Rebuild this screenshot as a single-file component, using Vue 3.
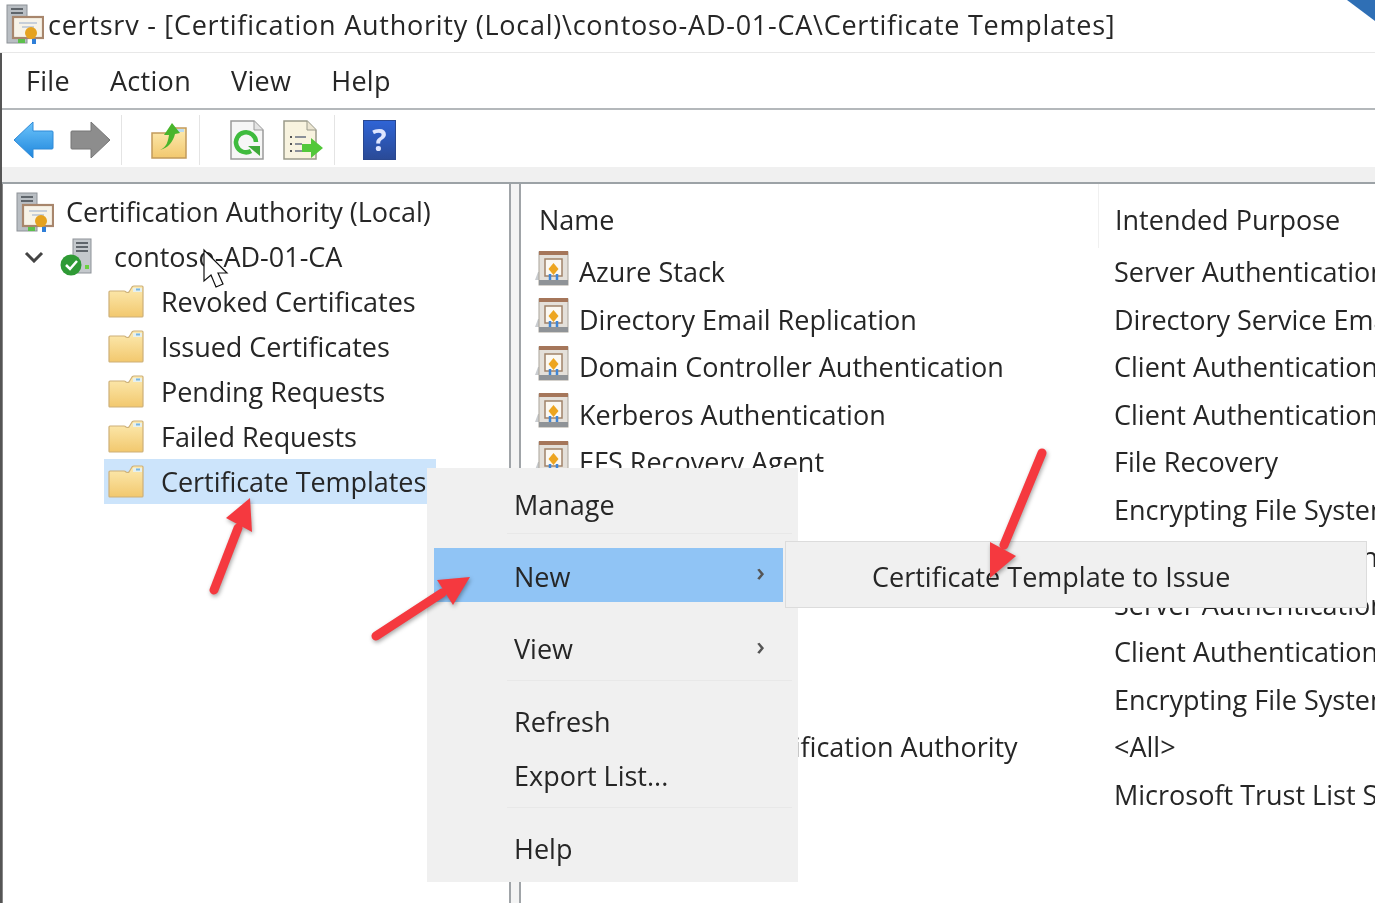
<script setup>
const menus = ['File', 'Action', 'View', 'Help']
const tree = ['Revoked Certificates', 'Issued Certificates', 'Pending Requests', 'Failed Requests', 'Certificate Templates']
const rows = [
  ['Azure Stack', 'Server Authentication'],
  ['Directory Email Replication', 'Directory Service Email Replication'],
  ['Domain Controller Authentication', 'Client Authentication'],
  ['Kerberos Authentication', 'Client Authentication'],
  ['EFS Recovery Agent', 'File Recovery'],
  ['', 'Encrypting File System'],
  ['', 'Client Authentication'],
  ['', 'Server Authentication'],
  ['', 'Client Authentication'],
  ['', 'Encrypting File System'],
  ['Subordinate Certification Authority', '<All>'],
  ['', 'Microsoft Trust List Signing']
]
</script>

<template>
  <div class="app">
    <svg class="defs" width="0" height="0" aria-hidden="true">
      <defs>
        <linearGradient id="fold" x1="0" y1="0" x2="0" y2="1">
          <stop offset="0" stop-color="#fdebb2" />
          <stop offset="1" stop-color="#f2c86e" />
        </linearGradient>
        <linearGradient id="blueArrow" x1="0" y1="0" x2="0" y2="1">
          <stop offset="0" stop-color="#6cc4fb" />
          <stop offset="1" stop-color="#1f86dc" />
        </linearGradient>
        <linearGradient id="helpBlue" x1="0" y1="0" x2="0" y2="1">
          <stop offset="0" stop-color="#2f64d6" />
          <stop offset="1" stop-color="#2a4a96" />
        </linearGradient>
        <symbol id="folder" viewBox="0 0 36 33">
          <path d="M1 7q0-1 1-1h14q1 0 2 1 2 1 3 0l3-5q1-1 2-1h8q1 0 1 1v29q0 1-1 1H2q-1 0-1-1z" fill="url(#fold)" stroke="#cdb078" stroke-width="1.200" />
          <path d="M25 3h9v4h-9z" fill="#e6f0ee" />
          <path d="M28 4.500h4" stroke="#7ab6e0" stroke-width="2" />
        </symbol>
        <symbol id="ca" viewBox="0 0 38 40">
          <rect x="1" y="1" width="20" height="38" fill="#b9bec3" stroke="#8d9298" />
          <path d="M5 5h12M5 9h12" stroke="#5f656b" stroke-width="2" />
          <rect x="7" y="13" width="30" height="21" fill="#f7f3e8" stroke="#a8866c" stroke-width="2.200" />
          <path d="M13 19h18M16 23h12" stroke="#b8c4d4" stroke-width="1.500" />
          <circle cx="25" cy="29" r="6" fill="#e5a21f" />
          <rect x="12" y="35" width="7" height="4" fill="#5cc04c" />
          <rect x="26" y="35" width="4" height="5" fill="#2f7fd8" />
        </symbol>
        <symbol id="server" viewBox="0 0 32 38">
          <rect x="13" y="1" width="18" height="34" fill="#c4c8cc" stroke="#8d9298" />
          <path d="M16 5h12M16 9h12M16 13h12" stroke="#5f656b" stroke-width="2" />
          <rect x="25" y="27" width="4" height="4" fill="#6ad040" />
          <circle cx="11" cy="27" r="10.500" fill="#2f9a35" />
          <path d="M6 27l4 4 7-8" fill="none" stroke="#fff" stroke-width="2.500" />
        </symbol>
        <symbol id="tpl" viewBox="0 0 35 36">
          <path d="M7 22H4l-3 8h6z" fill="#c9ccd0" />
          <rect x="5" y="2" width="29" height="33" fill="#e4e0da" stroke="#a9a39a" />
          <rect x="5" y="1" width="29" height="4" fill="#a5765a" />
          <rect x="11" y="9" width="17" height="17" fill="#fbf8f2" stroke="#a08269" stroke-width="1.500" />
          <path d="M19.500 13l5 6-5 6-5-6z" fill="#eda51f" />
          <path d="M16 24v6M23 24v6" stroke="#3e86d8" stroke-width="2.500" />
          <rect x="5" y="30" width="29" height="5" fill="#8f9397" />
        </symbol>
      </defs>
    </svg>

    <header class="title">
      <svg class="title-icon"><use href="#ca" /></svg>
      <span>certsrv - [Certification Authority (Local)\contoso-AD-01-CA\Certificate Templates]</span>
    </header>

    <div class="body">
      <nav class="menubar">
        <span v-for="m in menus" :key="m">{{ m }}</span>
      </nav>

      <div class="toolbar">
        <div class="tool-group g1">
          <svg width="41" height="38" viewBox="0 0 41 38">
            <path d="M1 19L20 1v9h19q1 0 1 1v16q0 1-1 1H20v9z" fill="url(#blueArrow)" stroke="#2f8ad8" />
          </svg>
          <svg width="41" height="38" viewBox="0 0 41 38">
            <path d="M40 19L21 1v9H2q-1 0-1 1v16q0 1 1 1h19v9z" fill="#8d8d8d" stroke="#777" />
          </svg>
        </div>
        <div class="tool-group g2">
          <svg width="38" height="37" viewBox="0 0 38 37">
            <path d="M2 11h20l3-5h11v30H2z" fill="url(#fold)" stroke="#c29b5b" stroke-width="1.500" />
            <path d="M26 7h8v3h-8z" fill="#bcdcf0" />
            <path d="M10 28c7-3 8-9 9-15h-5l8-12 8 10-5 1c-2 8-7 14-15 16z" fill="#49b52c" />
          </svg>
        </div>
        <div class="tool-group g3">
          <svg width="34" height="40" viewBox="0 0 34 40">
            <path d="M1 1h23l9 9v29H1z" fill="#f6f6f6" stroke="#9a9a9a" stroke-width="1.500" />
            <path d="M24 1v9h9" fill="#e4e4e4" stroke="#9a9a9a" />
            <path d="M21 31a10 10 0 1 1 5-9" fill="none" stroke="#3fbb3e" stroke-width="4.500" />
            <path d="M18 26h12v10z" fill="#3fa93a" />
          </svg>
          <svg width="41" height="40" viewBox="0 0 41 40">
            <path d="M1 1h23l9 9v29H1z" fill="#f8f3df" stroke="#9a9a8a" stroke-width="1.500" />
            <path d="M24 1v9h9" fill="#ece6d2" stroke="#9a9a8a" />
            <path d="M7 17h2M7 24h2M7 31h2" stroke="#555" stroke-width="2" />
            <path d="M12 17h11M12 24h7M12 31h7" stroke="#8b9099" stroke-width="2" />
            <path d="M19 24h9v-6l12 10-12 10v-6h-9z" fill="#52c83a" />
          </svg>
        </div>
        <div class="tool-group g4">
          <svg width="33" height="40" viewBox="0 0 33 40">
            <rect x="0.500" y="0.500" width="32" height="39" fill="url(#helpBlue)" stroke="#29478f" />
            <text x="16.500" y="31" class="help-q">?</text>
          </svg>
        </div>
      </div>

      <div class="strip"></div>

      <div class="panes">
        <aside class="tree">
          <div class="tree-row root">
            <svg class="ca-icon"><use href="#ca" /></svg>
            <span>Certification Authority (Local)</span>
          </div>
          <div class="tree-row host">
            <svg class="chev" width="20" height="12" viewBox="0 0 20 12">
              <path d="M2 2l8 8 8-8" fill="none" stroke="#444" stroke-width="3" />
            </svg>
            <svg class="server-icon"><use href="#server" /></svg>
            <span>contoso-AD-01-CA</span>
          </div>
          <div
            v-for="(t, i) in tree"
            :key="t"
            class="tree-row leaf"
            :class="{ selected: i === tree.length - 1 }"
          >
            <svg class="folder-icon"><use href="#folder" /></svg>
            <span>{{ t }}</span>
          </div>
        </aside>

        <div class="splitter"></div>

        <main class="list">
          <div class="list-head">
            <div class="col-name">Name</div>
            <div class="col-purpose">Intended Purpose</div>
          </div>
          <div v-for="(r, i) in rows" :key="i" class="list-row">
            <div class="cell-name">
              <svg v-if="r[0]" class="tpl-icon"><use href="#tpl" /></svg>
              <span v-if="r[0]">{{ r[0] }}</span>
            </div>
            <div class="cell-purpose">{{ r[1] }}</div>
          </div>
        </main>
      </div>
    </div>

    <div class="ctx">
      <div class="ctx-item first">Manage</div>
      <div class="ctx-sep"></div>
      <div class="ctx-item active">New<i class="more">›</i></div>
      <div class="ctx-gap"></div>
      <div class="ctx-item">View<i class="more">›</i></div>
      <div class="ctx-sep"></div>
      <div class="ctx-item">Refresh</div>
      <div class="ctx-item">Export List...</div>
      <div class="ctx-sep"></div>
      <div class="ctx-item">Help</div>
    </div>
    <div class="sub">Certificate Template to Issue</div>

    <svg class="overlay" width="1375" height="903" viewBox="0 0 1375 903">
      <path class="corner" d="M1347 0h28v21z" />
      <path class="cursor" d="M204 250v31l7-6 5 12 7-3-5-11h9z" />
      <g class="arrows">
        <path d="M214 590l24-62" class="shaft" />
        <path d="M250 498l2 34-26-14z" class="head" />
        <path d="M376 636l66-43" class="shaft" />
        <path d="M470 577l-17 28-16-25z" class="head" />
        <path d="M1042 453l-38 92" class="shaft" />
        <path d="M990 578v-36l26 14z" class="head" />
      </g>
    </svg>
  </div>
</template>

<style scoped>
.app {
  position: relative;
  width: 1375px;
  height: 903px;
  overflow: hidden;
  background: #fff;
  color: #262626;
  font-family: "Open Sans", "Noto Sans", sans-serif;
  font-size: 27px;
  white-space: nowrap;
  filter: blur(0.7px);
}
.defs { position: absolute; }
.title {
  height: 52px;
  box-sizing: content-box;
  display: flex;
  align-items: center;
  padding-left: 6px;
  gap: 4px;
  border-bottom: 1px solid #e8e8e8;
  letter-spacing: 0.75px;
}
.title span { padding-bottom: 4px; }
.title-icon { width: 38px; height: 40px; flex: none; margin-bottom: 4px; }
.body {
  height: 850px;
  border-left: 2px solid #555;
  display: flex;
  flex-direction: column;
}
.menubar {
  height: 55px;
  display: flex;
  align-items: center;
  gap: 40px;
  padding-left: 24px;
  border-bottom: 2px solid #b4b8bb;
  flex: none;
  letter-spacing: 0.3px;
}
.toolbar {
  height: 57px;
  box-sizing: border-box;
  padding-top: 5px;
  display: flex;
  align-items: flex-start;
  flex: none;
}
.tool-group {
  height: 50px;
  box-sizing: border-box;
  display: flex;
  align-items: center;
  border-right: 1px solid #e4e4e4;
}
.g1 { width: 120px; padding-left: 11px; gap: 16px; }
.g2 { width: 78px; padding-left: 28px; }
.g3 { width: 135px; padding-left: 30px; gap: 19px; }
.g4 { border: 0; padding-left: 28px; }
.help-q {
  fill: #dfe6ff;
  font-size: 30px;
  font-weight: 700;
  text-anchor: middle;
}
.strip {
  height: 15px;
  background: #f0f0f0;
  border-bottom: 2px solid #9ca2a6;
  flex: none;
}
.panes {
  flex: 1;
  display: flex;
  min-height: 0;
}
.tree {
  width: 506px;
  flex: none;
  padding-top: 5px;
  border-left: 1px solid #888;
}
.tree-row {
  height: 45px;
  display: flex;
  align-items: center;
}
.root { padding-left: 13px; gap: 12px; }
.ca-icon { width: 38px; height: 40px; flex: none; }
.host { padding-left: 21px; }
.chev { flex: none; margin-right: 16px; }
.server-icon { width: 32px; height: 38px; flex: none; margin-right: 22px; }
.leaf {
  margin-left: 101px;
  width: 332px;
  box-sizing: border-box;
  padding-left: 4px;
  gap: 17px;
  letter-spacing: -0.05px;
}
.selected { background: #cce4fb; }
.folder-icon { width: 36px; height: 33px; flex: none; }
.splitter {
  width: 12px;
  box-sizing: border-box;
  flex: none;
  background: #f4f4f4;
  border-left: 2px solid #a0a4a8;
  border-right: 2px solid #a0a4a8;
}
.list { flex: 1; min-width: 0; }
.list-head {
  height: 64px;
  display: flex;
  align-items: center;
}
.col-name {
  width: 577px;
  padding-left: 18px;
  flex: none;
  box-sizing: border-box;
  padding-top: 6px;
}
.col-purpose {
  padding-left: 16px;
  padding-top: 6px;
  border-left: 1px solid #f0f0f0;
  align-self: stretch;
  display: flex;
  align-items: center;
}
.list-row {
  height: 47.5px;
  display: flex;
  align-items: center;
}
.cell-name {
  width: 577px;
  flex: none;
  padding-left: 13px;
  box-sizing: border-box;
  display: flex;
  align-items: center;
  gap: 10px;
}
.tpl-icon { width: 35px; height: 36px; flex: none; margin-top: -8px; }
.cell-purpose { padding-left: 16px; }

.ctx {
  position: absolute;
  left: 427px;
  top: 468px;
  width: 371px;
  height: 414px;
  box-sizing: border-box;
  padding: 10px 15px 0 7px;
  background: #f0f0f0;
}
.ctx-item {
  position: relative;
  height: 54px;
  line-height: 54px;
  padding-left: 80px;
}
.first { height: 51px; }
.ctx-sep {
  height: 1px;
  margin: 4px -9px 14px 73px;
  background: #e8e8e8;
}
.ctx-gap { height: 20px; }
.active { background: #90c4f5; line-height: 58px; }
.more {
  position: absolute;
  right: 18px;
  top: -4px;
  line-height: 54px;
  font-style: normal;
  font-size: 26px;
  font-weight: 600;
  color: #555;
}
.sub {
  position: absolute;
  left: 785px;
  top: 541px;
  width: 582px;
  height: 67px;
  box-sizing: border-box;
  padding-left: 86px;
  line-height: 69px;
  background: #f0f0f0;
  border: 1px solid #dcdcdc;
}
.overlay { position: absolute; left: 0; top: 0; }
.corner { fill: #2f6fb5; }
.cursor { fill: #fff; stroke: #111; stroke-width: 1.200; }
.arrows { filter: drop-shadow(1px 2px 2px rgba(0, 0, 0, 0.35)); }
.shaft { fill: none; stroke: #f5393f; stroke-width: 9; stroke-linecap: round; }
.head { fill: #f5393f; }
</style>
